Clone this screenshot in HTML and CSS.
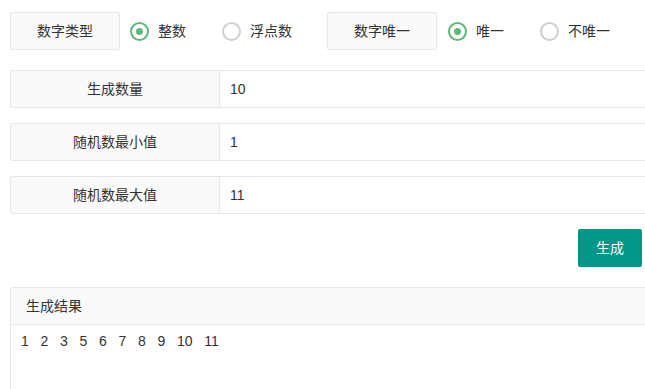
FILE: index.html
```html
<!DOCTYPE html>
<html lang="zh-CN">
<head>
<meta charset="utf-8">
<title>随机数生成</title>
<link rel="stylesheet" href="styles.css">
</head>
<body>
<div class="page">
  <div class="choice-row">
    <div class="label">数字类型</div>
    <div class="radio checked"><span class="dot"></span><span>整数</span></div>
    <div class="radio"><span class="dot"></span><span>浮点数</span></div>
    <div class="label">数字唯一</div>
    <div class="radio checked"><span class="dot"></span><span>唯一</span></div>
    <div class="radio"><span class="dot"></span><span>不唯一</span></div>
  </div>

  <div class="field">
    <div class="field-label">生成数量</div>
    <div class="field-input">10</div>
  </div>
  <div class="field">
    <div class="field-label">随机数最小值</div>
    <div class="field-input">1</div>
  </div>
  <div class="field">
    <div class="field-label">随机数最大值</div>
    <div class="field-input">11</div>
  </div>

  <div class="btn-row">
    <button class="btn">生成</button>
  </div>

  <div class="panel">
    <div class="panel-head">生成结果</div>
    <div class="panel-body">
      <span>1</span><span>2</span><span>3</span><span>5</span><span>6</span><span>7</span><span>8</span><span>9</span><span>10</span><span>11</span>
    </div>
  </div>
</div>
</body>
</html>
```

FILE: styles.css
```css
html, body {
  margin: 0;
  padding: 0;
  background: #fff;
  overflow: hidden;
}

body {
  font-family: "Liberation Sans", "Noto Sans CJK SC", sans-serif;
  font-size: 14px;
  color: #333;
}

.page {
  width: 700px;
  padding: 12px 0 0 10px;
}

.choice-row {
  display: flex;
  align-items: center;
  height: 38px;
}

.label {
  box-sizing: border-box;
  width: 110px;
  height: 38px;
  line-height: 36px;
  text-align: center;
  background: #fafafa;
  border: 1px solid #e6e6e6;
  border-radius: 2px;
  margin-right: 10px;
}

.radio + .label {
  margin-left: -1px;
  margin-right: 11px;
}

.radio {
  display: flex;
  align-items: center;
  margin-right: 36px;
  line-height: 20px;
}

.radio .dot {
  box-sizing: border-box;
  width: 19px;
  height: 19px;
  border: 2px solid #cfcfcf;
  border-radius: 50%;
  margin-right: 9px;
  display: flex;
  align-items: center;
  justify-content: center;
}

.radio.checked .dot {
  border-color: #5fb878;
}

.radio.checked .dot::after {
  content: "";
  width: 7px;
  height: 7px;
  border-radius: 50%;
  background: #5fb878;
}

.field {
  display: flex;
  height: 38px;
  margin-top: 15px;
}

.choice-row + .field {
  margin-top: 20px;
}

.field-label {
  box-sizing: border-box;
  width: 210px;
  flex: none;
  line-height: 36px;
  text-align: center;
  background: #fafafa;
  border: 1px solid #e6e6e6;
  border-radius: 2px 0 0 2px;
}

.field-input {
  box-sizing: border-box;
  flex: 1;
  line-height: 36px;
  padding-left: 10px;
  background: #fff;
  border: 1px solid #e6e6e6;
  border-left: none;
}

.btn-row {
  display: flex;
  justify-content: flex-end;
  padding-right: 68px;
  margin-top: 15px;
}

.btn {
  height: 38px;
  padding: 0 18px;
  border: none;
  border-radius: 2px;
  background: #009688;
  color: #fff;
  font-family: "Liberation Sans", "Noto Sans CJK SC", sans-serif;
  font-size: 14px;
  line-height: 38px;
}

.panel {
  margin-top: 20px;
  border: 1px solid #e6e6e6;
  border-radius: 2px;
  height: 120px;
}

.panel-head {
  height: 36px;
  line-height: 36px;
  padding-left: 15px;
  background: #fafafa;
  border-bottom: 1px solid #e6e6e6;
}

.panel-body {
  display: flex;
  gap: 11.7px;
  padding: 6px 10px;
  line-height: 20px;
}
```
